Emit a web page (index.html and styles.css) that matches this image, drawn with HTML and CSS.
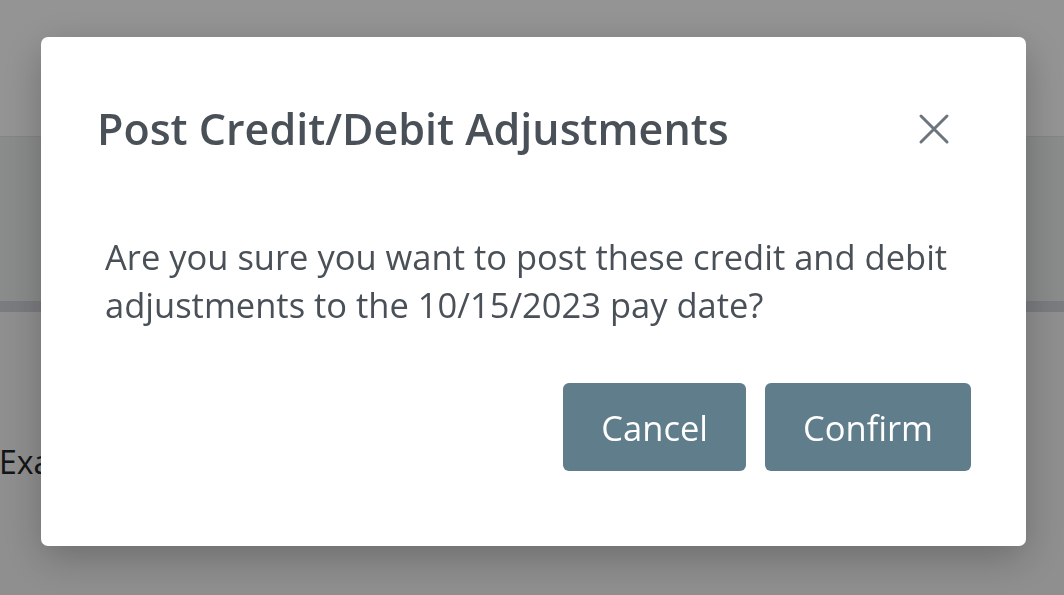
FILE: index.html
```html
<!DOCTYPE html>
<html lang="en">
<head>
    <meta charset="UTF-8">
    <meta name="viewport" content="width=device-width, initial-scale=1.0">
    <title>Credit/Debit Adjustments</title>
    <link rel="stylesheet" href="styles.css">
</head>
<body>
    <div class="page">
        <div class="topbar"></div>
        <div class="toolbar"></div>
        <div class="divider"></div>
        <div class="content">
            <p class="content-text">Example employee adjustments</p>
        </div>
    </div>

    <!-- confirm dialog -->
    <div class="backdrop">
        <div class="modal">
            <div class="modal-header">
                <h5 class="modal-title">Post Credit/Debit Adjustments</h5>
                <button type="button" class="btn-close" aria-label="Close">
                    <svg width="32" height="32" viewBox="0 0 32 32">
                        <path d="M3 3 L29 29 M29 3 L3 29" stroke="#6c757d" stroke-width="3" stroke-linecap="round" fill="none"/>
                    </svg>
                </button>
            </div>
            <div class="modal-body">
                <p>Are you sure you want to post these credit and debit adjustments to the 10/15/2023 pay date?</p>
            </div>
            <div class="modal-footer">
                <button type="button" class="btn">Cancel</button>
                <button type="button" class="btn">Confirm</button>
            </div>
        </div>
    </div>
</body>
</html>
```

FILE: styles.css
```css
body {
    font-family: 'Open Sans', 'Noto Sans', Arial, sans-serif;
    margin: 0;
    padding: 0;
    background-color: #fff;
    color: #212529;
    overflow: hidden;
}

.topbar {
    height: 136px;
    background: #fff;
    border-bottom: 1px solid #e4e5e9;
}

.toolbar {
    height: 164px;
    background: #eef0f0;
}

.divider {
    height: 11px;
    background: #d4d6dc;
}

.content {
    padding-top: 126px;
    background: #f7f7f7;
    height: 158px;
}

.content-text {
    margin: 0;
    font-size: 32px;
    line-height: 48px;
    margin-left: -1px;
    white-space: nowrap;
}

.backdrop {
    position: fixed;
    top: 0;
    left: 0;
    right: 0;
    bottom: 0;
    background: rgba(0, 0, 0, 0.42);
}

.modal {
    width: 985px;
    margin: 37px 0 0 41px;
    background: #fff;
    border-radius: 7px;
    box-shadow: 0 12px 40px rgba(0, 0, 0, 0.25);
    color: #495057;
}

.modal-header {
    display: flex;
    align-items: center;
    justify-content: space-between;
    padding: 66px 76px 0 56px;
}

.modal-title {
    margin: 0;
    font-size: 43px;
    font-weight: 600;
    line-height: 52px;
}

.btn-close {
    border: none;
    background: none;
    padding: 0;
    width: 32px;
    height: 32px;
    cursor: pointer;
}

.modal-body {
    padding: 78px 50px 0 64px;
}

.modal-body p {
    margin: 0;
    font-size: 34.5px;
    line-height: 48px;
}

.modal-footer {
    display: flex;
    justify-content: flex-end;
    gap: 19px;
    padding: 54px 55px 75px 0;
}

.btn {
    font-family: inherit;
    background-color: #607d8b;
    color: #fff;
    border: none;
    border-radius: 6px;
    padding: 20px 38px 18px;
    font-size: 34.5px;
    line-height: 50px;
    height: 88px;
    cursor: pointer;
}
```
